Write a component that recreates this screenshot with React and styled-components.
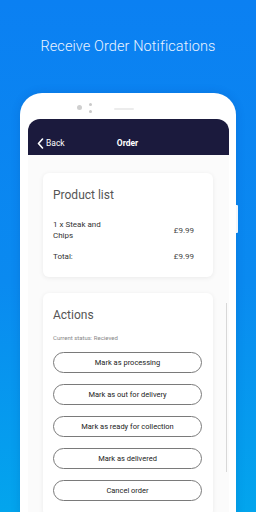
import styled, { createGlobalStyle } from "styled-components";

const GlobalStyle = createGlobalStyle`
    body {
        margin: 0;
        font-family: Roboto, "Liberation Sans", sans-serif;
    }
    * {
        box-sizing: border-box;
    }
`;

const actions = [
    "Mark as processing",
    "Mark as out for delivery",
    "Mark as ready for collection",
    "Mark as delivered",
    "Cancel order",
];

export default function App() {
    return (
        <Page>
            <GlobalStyle />
            <Heading>Receive Order Notifications</Heading>
            <Phone>
                <SideButton />
                <PhoneTop>
                    <Lens />
                    <Sensors>
                        <span />
                        <span />
                    </Sensors>
                    <Speaker />
                </PhoneTop>
                <Screen>
                    <NavBar>
                        <BackLink>
                            <svg width="7" height="11" viewBox="0 0 7 11">
                                <path d="M5.5 1 L1.5 5.5 L5.5 10" fill="none" stroke="#fff" strokeWidth="1.6" strokeLinecap="round" strokeLinejoin="round" />
                            </svg>
                            Back
                        </BackLink>
                        <NavTitle>Order</NavTitle>
                    </NavBar>
                    <Content>
                        <ScrollBar />
                        <Card>
                            <CardTitle>Product list</CardTitle>
                            <Row>
                                <span>1 x Steak and<br />Chips</span>
                                <Price>£9.99</Price>
                            </Row>
                            <Row>
                                <span>Total:</span>
                                <Price>£9.99</Price>
                            </Row>
                        </Card>
                        <Card>
                            <CardTitle>Actions</CardTitle>
                            <Status>Current status: Recieved</Status>
                            <ButtonList>
                                {actions.map(a => <ActionButton key={a}>{a}</ActionButton>)}
                            </ButtonList>
                        </Card>
                    </Content>
                </Screen>
            </Phone>
        </Page>
    );
}

const Page = styled.div`
    width: 256px;
    height: 512px;
    overflow: hidden;
    display: flex;
    flex-direction: column;
    align-items: center;
    background: linear-gradient(180deg, #0b80f2 0%, #0a8af0 55%, #03a5ed 100%);
`;

const Heading = styled.h1`
    margin: 38px 0 0;
    font-family: Roboto, "Liberation Sans", sans-serif;
    font-weight: 300;
    font-size: 14.5px;
    line-height: 17px;
    color: #eaf3ff;
    letter-spacing: 0.1px;
`;

const Phone = styled.div`
    position: relative;
    margin-top: 38px;
    width: 216px;
    flex: 1;
    display: flex;
    flex-direction: column;
    padding: 0 7px 0 8px;
    background: #fff;
    border-radius: 22px 22px 0 0;
    box-shadow: 0 0 10px rgba(0, 40, 120, 0.15);
`;

const SideButton = styled.div`
    position: absolute;
    right: -2px;
    top: 112px;
    width: 2px;
    height: 28px;
    background: #f2f6fb;
    border-radius: 0 1px 1px 0;
`;

const PhoneTop = styled.div`
    height: 26px;
    display: flex;
    align-items: center;
    padding-left: 49px;
    gap: 7px;
`;

const Lens = styled.div`
    width: 5px;
    height: 5px;
    border-radius: 50%;
    background: #cfcfcf;
    margin-top: 3px;
`;

const Sensors = styled.div`
    display: flex;
    flex-direction: column;
    gap: 4px;
    margin-top: 3px;

    span {
        width: 3px;
        height: 3px;
        border-radius: 50%;
        background: #c9c9c9;
    }
`;

const Speaker = styled.div`
    width: 20px;
    height: 2px;
    border-radius: 1px;
    background: #ececec;
    margin-left: 15px;
    margin-top: 5px;
`;

const Screen = styled.div`
    flex: 1;
    display: flex;
    flex-direction: column;
    background: #fbfbfb;
    border-radius: 12px 12px 0 0;
    overflow: hidden;
`;

const NavBar = styled.div`
    position: relative;
    height: 36px;
    flex-shrink: 0;
    display: flex;
    align-items: flex-end;
    justify-content: center;
    padding-bottom: 6px;
    background: #1b1a3d;
    color: #fff;
`;

const BackLink = styled.div`
    position: absolute;
    left: 9px;
    bottom: 6px;
    display: flex;
    align-items: center;
    gap: 2px;
    font-size: 8.5px;
    line-height: 11px;
    font-weight: 400;
`;

const NavTitle = styled.div`
    font-size: 8.5px;
    line-height: 11px;
    font-weight: 700;
    margin-left: -2px;
`;

const Content = styled.div`
    position: relative;
    flex: 1;
    display: flex;
    flex-direction: column;
    gap: 16px;
    padding: 18px 16px 0 15px;
`;

const ScrollBar = styled.div`
    position: absolute;
    right: 2px;
    top: 148px;
    width: 1px;
    height: 169px;
    background: #d8d8d8;
`;

const Card = styled.div`
    background: #fff;
    border-radius: 6px;
    box-shadow: 0 1px 5px rgba(0, 0, 0, 0.07);
    padding: 15px 10px 15px 10px;
    display: flex;
    flex-direction: column;
`;

const CardTitle = styled.div`
    font-size: 12px;
    line-height: 15px;
    color: #555;
    margin-bottom: 16px;
`;

const Row = styled.div`
    display: flex;
    justify-content: space-between;
    align-items: center;
    padding-right: 9px;
    font-size: 8px;
    line-height: 11px;
    color: #333;
    margin-bottom: 10px;

    &:last-child {
        margin-bottom: 0;
    }
`;

const Price = styled.span`
    color: #444;
`;

const Status = styled.div`
    font-size: 6px;
    line-height: 8px;
    color: #888;
    margin: -5px 0 10px;
`;

const ButtonList = styled.div`
    display: flex;
    flex-direction: column;
    gap: 11px;
`;

const ActionButton = styled.button`
    width: 149px;
    height: 21px;
    border: 1px solid #7a7a7a;
    border-radius: 11px;
    background: #fff;
    font-family: Roboto, "Liberation Sans", sans-serif;
    font-size: 7.5px;
    color: #222;
    padding: 0;
`;
